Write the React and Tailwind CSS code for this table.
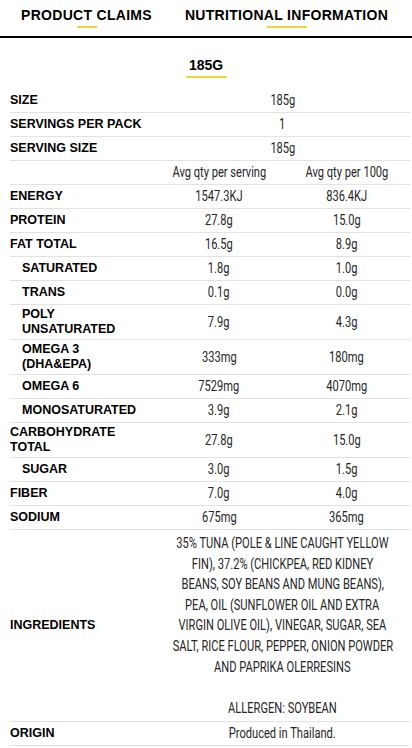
import React from 'react';

const label = "font-['Liberation_Sans',Arial,sans-serif] font-bold text-[12.5px] leading-[15px] text-black uppercase";
const val = "font-['Roboto',sans-serif] font-normal text-[15px] leading-[17px] text-[#262626] flex flex-col items-center";

const rows = [
    { name: 'Energy', a: '1547.3KJ', b: '836.4KJ' },
    { name: 'Protein', a: '27.8g', b: '15.0g' },
    { name: 'Fat total', a: '16.5g', b: '8.9g' },
    { name: 'Saturated', a: '1.8g', b: '1.0g', sub: true },
    { name: 'Trans', a: '0.1g', b: '0.0g', sub: true },
    { name: ['Poly', 'Unsaturated'], a: '7.9g', b: '4.3g', sub: true },
    { name: ['Omega 3', '(DHA&EPA)'], a: '333mg', b: '180mg', sub: true },
    { name: 'Omega 6', a: '7529mg', b: '4070mg', sub: true },
    { name: 'Monosaturated', a: '3.9g', b: '2.1g', sub: true },
    { name: ['Carbohydrate', 'Total'], a: '27.8g', b: '15.0g' },
    { name: 'Sugar', a: '3.0g', b: '1.5g', sub: true },
    { name: 'Fiber', a: '7.0g', b: '4.0g' },
    { name: 'Sodium', a: '675mg', b: '365mg' },
];

const ingredients = [
    '35% TUNA (POLE & LINE CAUGHT YELLOW',
    'FIN), 37.2% (CHICKPEA, RED KIDNEY',
    'BEANS, SOY BEANS AND MUNG BEANS),',
    'PEA, OIL (SUNFLOWER OIL AND EXTRA',
    'VIRGIN OLIVE OIL), VINEGAR, SUGAR, SEA',
    'SALT, RICE FLOUR, PEPPER, ONION POWDER',
    'AND PAPRIKA OLERRESINS',
];

// condensed look: the value face is narrow, so squeeze the glyphs horizontally
const Narrow = ({ children }) => (
    <span className="inline-block whitespace-nowrap scale-x-[0.74]">{children}</span>
);

const Row = ({ children, tall }) => (
    <div className={`flex items-center border-b border-[#e2e2e2] ${tall ? 'min-h-[35px] py-[2px]' : 'min-h-[24px] py-[3px]'}`}>
        {children}
    </div>
);

const Label = ({ name, sub }) => (
    <div className={`w-[145px] shrink-0 ${sub ? 'pl-[12px]' : ''} ${label}`}>
        {Array.isArray(name) ? name.map((n) => <div key={n}>{n}</div>) : name}
    </div>
);

export default function App() {
    return (
        <div className="w-[412px] bg-white min-h-[748px] overflow-x-hidden">
            <div className="flex h-[38px] border-b-2 border-black font-['Liberation_Sans',Arial,sans-serif] font-bold text-[14px] tracking-[0.3px] text-black">
                <div className="w-[173px] flex flex-col items-center pt-[7px]">
                    <span className="leading-[16px]">PRODUCT CLAIMS</span>
                    <span className="mt-[3px] w-[20px] h-[2px] bg-[#f0d43a]" />
                </div>
                <div className="flex-1 flex flex-col items-center pt-[7px] pr-[12px]">
                    <span className="leading-[16px]">NUTRITIONAL INFORMATION</span>
                    <span className="mt-[3px] w-[40px] h-[2px] bg-[#f0d43a]" />
                </div>
            </div>

            <div className="flex flex-col items-center pt-[19px] pb-[11px] font-['Liberation_Sans',Arial,sans-serif] font-bold text-[14px] text-black">
                <span className="leading-[16px]">185G</span>
                <span className="mt-[3px] w-[41px] h-[2px] bg-[#f0d43a]" />
            </div>

            <div className="ml-[10px] w-[400px]">
                {[['Size', '185g'], ['Servings per pack', '1'], ['Serving size', '185g']].map(([n, v]) => (
                    <Row key={n}>
                        <Label name={n} />
                        <div className={`flex-1 ${val}`}><Narrow>{v}</Narrow></div>
                    </Row>
                ))}
                <Row>
                    <div className="w-[145px] shrink-0" />
                    <div className={`w-[128px] ${val}`}><Narrow>Avg qty per serving</Narrow></div>
                    <div className={`flex-1 ${val}`}><Narrow>Avg qty per 100g</Narrow></div>
                </Row>
                {rows.map((r) => (
                    <Row key={r.a + r.b + r.name} tall={Array.isArray(r.name)}>
                        <Label name={r.name} sub={r.sub} />
                        <div className={`w-[128px] ${val}`}><Narrow>{r.a}</Narrow></div>
                        <div className={`flex-1 ${val}`}><Narrow>{r.b}</Narrow></div>
                    </Row>
                ))}
                <Row>
                    <Label name="Ingredients" />
                    <div className={`flex-1 min-w-0 ${val} leading-[20.6px]`}>
                        {ingredients.map((l) => <Narrow key={l}>{l}</Narrow>)}
                        <span>&nbsp;</span>
                        <Narrow>ALLERGEN: SOYBEAN</Narrow>
                    </div>
                </Row>
                <Row>
                    <Label name="Origin" />
                    <div className={`flex-1 ${val}`}><Narrow>Produced in Thailand.</Narrow></div>
                </Row>
            </div>
        </div>
    );
}
